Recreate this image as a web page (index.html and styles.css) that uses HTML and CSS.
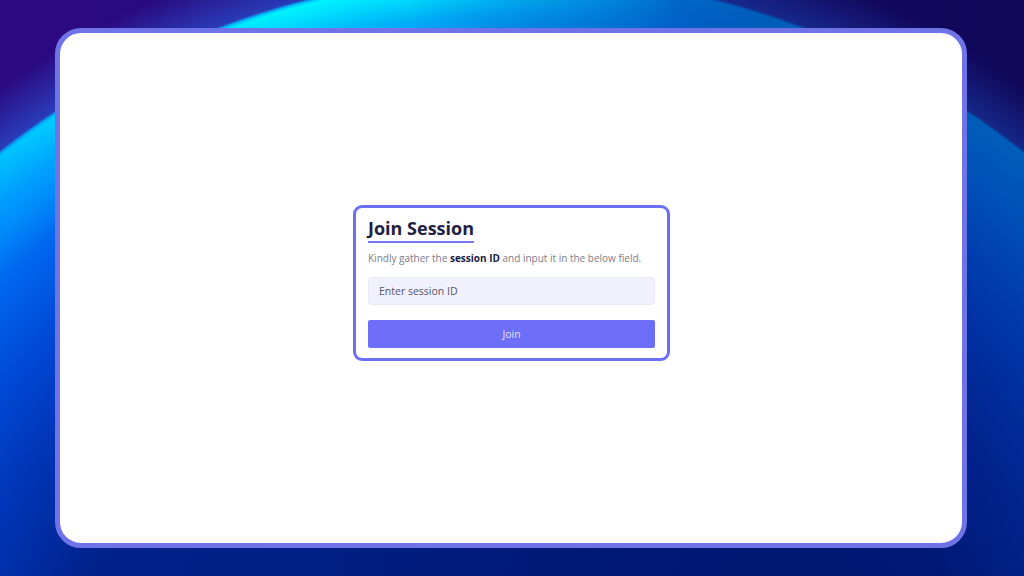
FILE: index.html
```html
<!DOCTYPE html>
<html>
<head>
	<meta charset="utf-8">
	<title>Join Session</title>
	<link rel="stylesheet" href="styles.css">
</head>
<body>
<div class="frame">
	<div class="join">
		<h1 class="join-title">Join Session</h1>
		<p class="join-text">Kindly gather the <b>session ID</b> and input it in the below field.</p>
		<input class="join-input" type="text" placeholder="Enter session ID">
		<button class="join-btn" type="button">Join</button>
	</div>
</div>
</body>
</html>
```

FILE: styles.css
```css
html, body {
	margin:0;
	height:100%;
	overflow:hidden;
	}
body {
	position:relative;
	box-sizing:border-box;
	padding-top:28px;
	font-family:"Open Sans", "Noto Sans", sans-serif;
	/* big glowing disc behind the frame */
	background:
		linear-gradient(to right, rgba(0,20,90,0) 30%, rgba(0,10,80,0.4) 75%),
		radial-gradient(circle 829px at 512px 802px, #001a78 0%, #00228c 58%, #0034b4 70%, #0048d4 79%, #0064ee 87%, #0082fc 94%, #0094ff 99.6%, rgba(40,100,230,0.55) 100%, rgba(40,90,220,0) 106%),
		linear-gradient(to right, #2b0a82 0%, #26087a 45%, #1a0660 100%);
	}
/* cyan rim, strongest on the upper left */
body::before {
	content:'';
	position:absolute;
	top:0;
	left:0;
	right:0;
	bottom:0;
	background:radial-gradient(circle 829px at 512px 802px, rgba(0,220,255,0) 88%, rgba(0,220,255,0.55) 95%, #00f2ff 99.3%, rgba(0,240,255,0) 100%);
	-webkit-mask-image:linear-gradient(to right, rgba(0,0,0,0.5) 0, #000 280px, #000 410px, transparent 680px);
	mask-image:linear-gradient(to right, rgba(0,0,0,0.5) 0, #000 280px, #000 410px, transparent 680px);
	}
.frame {
	position:relative;
	z-index:1;
	box-sizing:border-box;
	height:520px;
	margin:0 57px 0 55px;
	background:#fff;
	border:5px solid #6f73e7;
	border-radius:26px;
	display:flex;
	align-items:center;
	justify-content:center;
	padding:0 0 10px 1px;
	}
.join {
	box-sizing:border-box;
	width:317px;
	padding:8px 12px 10px;
	border:3px solid #6c6ff6;
	border-radius:9px;
	display:flex;
	flex-direction:column;
	align-items:flex-start;
	}
.join-title {
	margin:0;
	font-size:18px;
	line-height:24px;
	font-weight:700;
	color:#211e42;
	border-bottom:2px solid #7677f2;
	padding-bottom:1px;
	}
.join-text {
	margin:7px 0 11px;
	font-size:10px;
	line-height:16px;
	white-space:nowrap;
	color:#7c7c8c;
	}
.join-text b {
	color:#211e42;
	font-weight:700;
	}
.join-input {
	box-sizing:border-box;
	width:100%;
	height:28px;
	margin:0;
	padding:0 10px;
	border:1px solid #e9e8fb;
	border-radius:4px;
	background:#f1f0fd;
	font:10.5px "Open Sans", sans-serif;
	outline:none;
	}
.join-input::placeholder {
	color:#55556a;
	}
.join-btn {
	width:100%;
	height:28px;
	margin:15px 0 0;
	border:0;
	border-radius:2px;
	background:#6d6ff8;
	color:#e2e2ff;
	font:10.5px "Open Sans", sans-serif;
	}
```
